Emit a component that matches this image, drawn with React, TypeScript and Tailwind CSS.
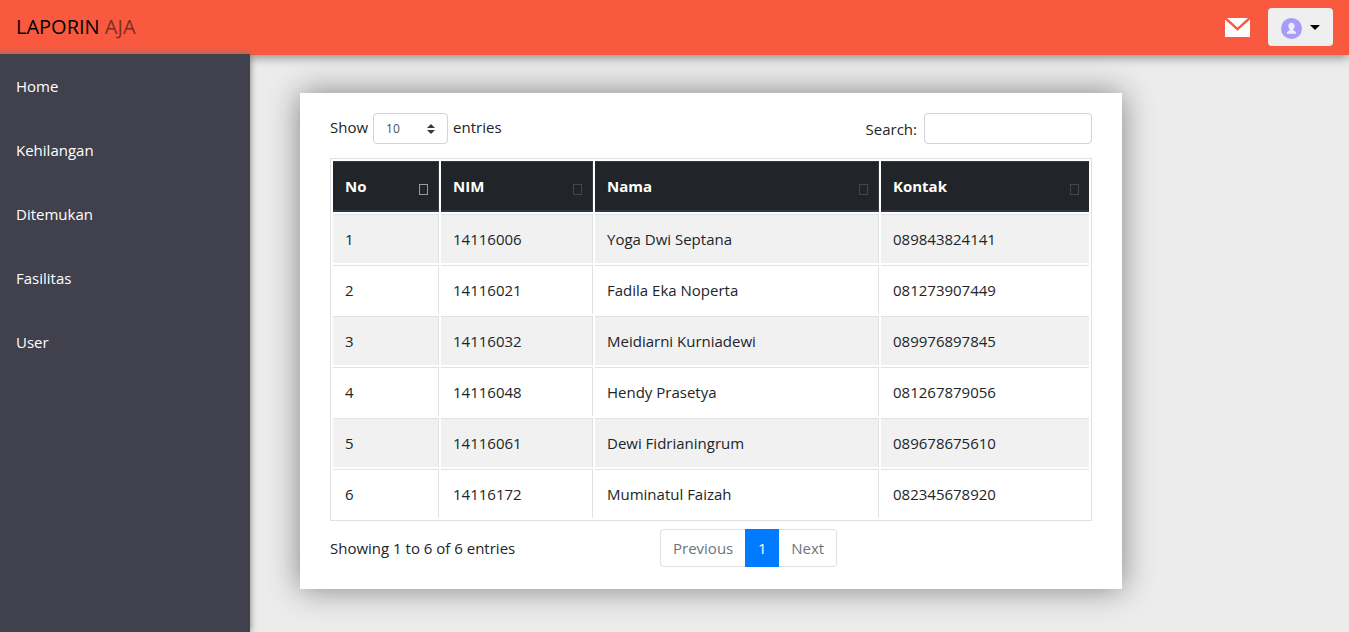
import React from "react";

const menu = ["Home", "Kehilangan", "Ditemukan", "Fasilitas", "User"];

const rows = [
  ["1", "14116006", "Yoga Dwi Septana", "089843824141"],
  ["2", "14116021", "Fadila Eka Noperta", "081273907449"],
  ["3", "14116032", "Meidiarni Kurniadewi", "089976897845"],
  ["4", "14116048", "Hendy Prasetya", "081267879056"],
  ["5", "14116061", "Dewi Fidrianingrum", "089678675610"],
  ["6", "14116172", "Muminatul Faizah", "082345678920"],
];

const columns = ["No", "NIM", "Nama", "Kontak"];

function Header() {
  return (
    <header className="relative z-10 flex h-[55px] items-center justify-between bg-[#f95a3f] px-4 pb-px shadow-[0_2px_10px_rgba(0,0,0,0.45)]">
      <a href="#home" className="text-xl leading-7 text-black">
        LAPORIN <span className="opacity-50">AJA</span>
      </a>
      <div className="flex items-center gap-[18px]">
        <a href="#messages" aria-label="Messages">
          <svg width="25" height="19" viewBox="0 0 25 19" fill="#fff">
            <path d="M2 0h21L12.5 9.6z" />
            <path d="M0 1.6l12.5 11.2L25 1.6V19H0z" />
          </svg>
        </a>
        <button
          type="button"
          aria-label="Account"
          className="flex h-[38px] w-[65px] items-center rounded bg-[#efefef] pl-[13px]"
        >
          <svg width="21" height="21" viewBox="0 0 21 21" className="mt-[3px]">
            <circle cx="10.5" cy="10.5" r="10.5" fill="#a79bfb" />
            <path
              d="M10.5 4.8c2 0 3.1 1.3 3.1 3.1 0 1.5-.6 2.6-1.4 3.3v.9c.2.8 2.9 1 3 3.3v.4H5.8v-.4c.1-2.3 2.8-2.5 3-3.3v-.9c-.8-.7-1.4-1.8-1.4-3.3 0-1.8 1.1-3.1 3.1-3.1z"
              fill="#efefef"
            />
          </svg>
          <svg width="10" height="5" viewBox="0 0 10 5" className="ml-2">
            <path d="M0 0h10L5 5z" fill="#000" />
          </svg>
        </button>
      </div>
    </header>
  );
}

function Sidebar() {
  return (
    <nav className="relative z-20 -mt-px w-[250px] shrink-0 bg-[#41414d] shadow-[0_0_7px_#777777]">
      {menu.map((item) => (
        <a
          key={item}
          href={`#${item.toLowerCase()}`}
          className="block px-4 py-5 text-[15px] leading-6 font-medium text-white"
        >
          {item}
        </a>
      ))}
    </nav>
  );
}

function DataTable() {
  return (
    <table className="mt-[14px] w-full table-fixed border-separate border-spacing-[2px] border border-[#dee2e6]">
      <colgroup>
        <col className="w-[106px]" />
        <col className="w-[152px]" />
        <col className="w-[284px]" />
        <col className="w-[208px]" />
      </colgroup>
      <thead>
        <tr>
          {columns.map((name, i) => (
            <th
              key={name}
              className="border-t border-r border-b-2 border-[#32383e] bg-[#212529] py-3 pr-[10px] pl-3 text-left font-bold text-white last:border-r-0"
            >
              <div className="flex items-center justify-between">
                {name}
                <span
                  aria-hidden="true"
                  className={
                    i === 0
                      ? "mt-[6px] h-[11px] w-[9px] border border-[#9a9b9d]"
                      : "mt-[6px] h-[11px] w-[9px] border border-[#44474a]"
                  }
                />
              </div>
            </th>
          ))}
        </tr>
      </thead>
      <tbody>
        {rows.map((row) => (
          <tr key={row[0]} className="odd:*:bg-[#f1f1f1]">
            {row.map((cell) => (
              <td key={cell} className="border-t border-r border-[#dee2e6] p-3 last:border-r-0">
                {cell}
              </td>
            ))}
          </tr>
        ))}
      </tbody>
    </table>
  );
}

export default function App() {
  return (
    <div className="flex min-h-screen flex-col bg-[#ececec] font-['Open_Sans','Noto_Sans',sans-serif] text-[15px] leading-6 text-[#212529]">
      <Header />
      <div className="flex grow">
        <Sidebar />
        <main className="grow pt-[38px] pr-[227px] pb-[43px] pl-[50px]">
          <section className="bg-white px-[30px] pt-5 pb-[22px] shadow-[0_0_30px_rgba(0,0,0,0.45)]">
            <div className="flex items-center justify-between">
              <label className="flex items-baseline gap-[5px]">
                Show
                <span className="relative">
                  <select
                    defaultValue="10"
                    className="h-[31px] w-[75px] appearance-none rounded border border-[#ced4da] bg-white px-3 text-xs text-[#495057]"
                  >
                    <option>10</option>
                    <option>25</option>
                    <option>50</option>
                    <option>100</option>
                  </select>
                  <svg
                    width="8"
                    height="10"
                    viewBox="0 0 4 5"
                    className="pointer-events-none absolute top-[11px] right-[13px]"
                  >
                    <path d="M2 0L0 2h4zm0 5L0 3h4z" fill="#343a40" />
                  </svg>
                </span>
                entries
              </label>
              <label className="flex items-center gap-[7px]">
                Search:
                <input
                  type="search"
                  className="h-[31px] w-[168px] rounded border border-[#ced4da] bg-white px-2"
                />
              </label>
            </div>
            <DataTable />
            <div className="-mx-[15px] mt-2 flex items-center">
              <p className="w-5/12 px-[15px]">Showing 1 to 6 of 6 entries</p>
              <div className="flex px-[15px]">
                <button type="button" className="h-[38px] rounded-l border border-r-0 border-[#dee2e6] px-3 text-[#6c757d]">
                  Previous
                </button>
                <button type="button" className="h-[38px] w-[34px] bg-[#007bff] text-white">
                  1
                </button>
                <button type="button" className="h-[38px] rounded-r border border-l-0 border-[#dee2e6] px-3 text-[#6c757d]">
                  Next
                </button>
              </div>
            </div>
          </section>
        </main>
      </div>
    </div>
  );
}
